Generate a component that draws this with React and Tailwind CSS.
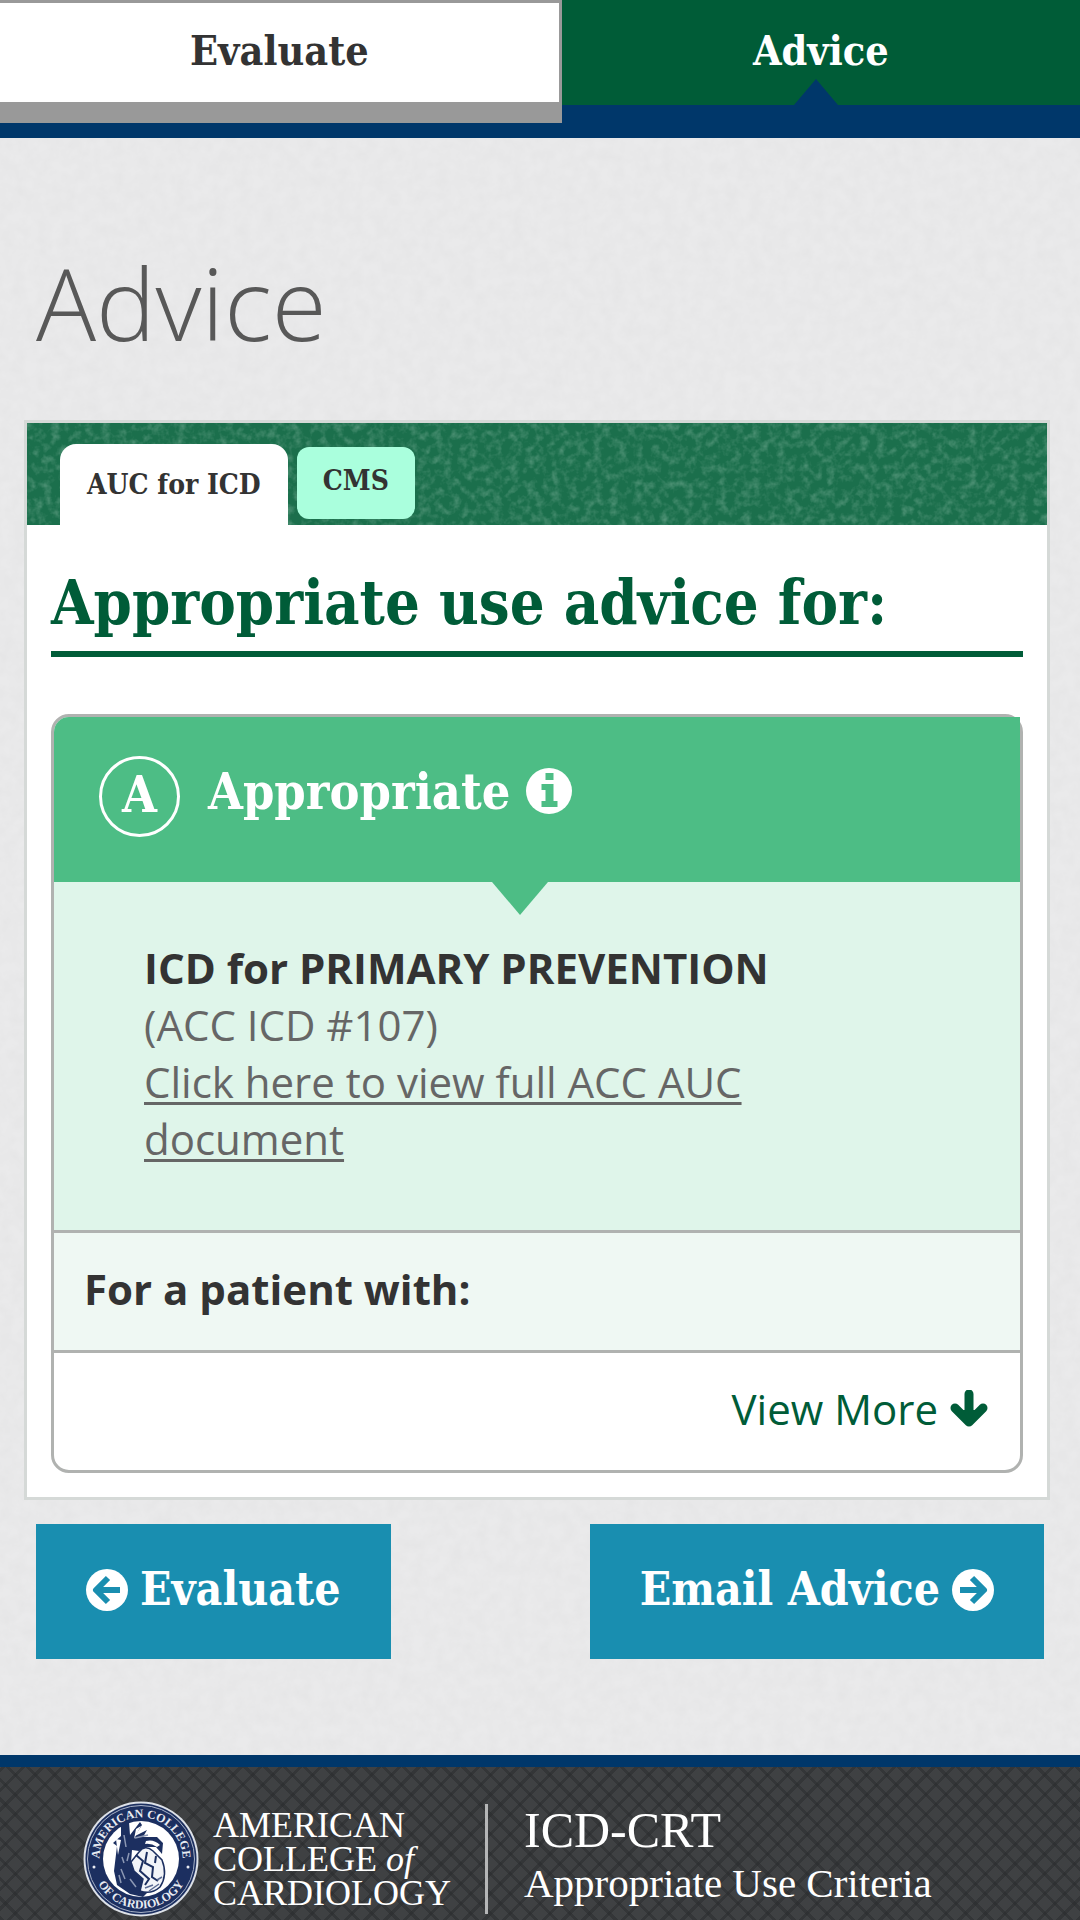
import { useState } from 'react';

const panelTabs = ['AUC for ICD', 'CMS'];

function Noise({ id, frequency, matrix }) {
  return (
    <svg className="absolute inset-0 w-full h-full pointer-events-none" aria-hidden="true">
      <filter id={id} x="0" y="0" width="100%" height="100%">
        <feTurbulence type="fractalNoise" baseFrequency={frequency} numOctaves="3" seed="4" />
        <feColorMatrix type="matrix" values={matrix} />
      </filter>
      <rect width="100%" height="100%" filter={`url(#${id})`} />
    </svg>
  );
}

function ArrowCircle({ className }) {
  return (
    <svg viewBox="0 0 42 42" className={className} aria-hidden="true">
      <circle cx="21" cy="21" r="21" fill="#fff" />
      <path d="M12 21H34" fill="none" stroke="#198eb0" strokeWidth="6" />
      <path d="M22 9L10 21L22 33" fill="none" stroke="#198eb0" strokeWidth="6" strokeLinejoin="round" />
    </svg>
  );
}

function InfoCircle() {
  return (
    <svg viewBox="0 0 46 46" className="w-[46px] h-[46px]" aria-hidden="true">
      <circle cx="23" cy="23" r="23" fill="#fff" />
      <path d="M19.500 5h8v7h-8zM15.500 16h12v17h4v6h-16v-6h4v-11h-4z" fill="#4dbd85" />
    </svg>
  );
}

function ArrowDown() {
  return (
    <svg viewBox="0 0 38 38" className="w-[38px] h-[38px]" aria-hidden="true">
      <path
        d="M19 4V28M5 18L19 32L33 18"
        fill="none"
        stroke="#005c38"
        strokeWidth="9"
        strokeLinecap="round"
        strokeLinejoin="round"
      />
      <path d="M12 20H26L19 32Z" fill="#005c38" />
    </svg>
  );
}

function Seal() {
  return (
    <svg viewBox="0 0 116 116" className="w-[116px] h-[116px] shrink-0" role="img" aria-label="American College of Cardiology seal">
      <circle cx="58" cy="58" r="57.500" fill="#dde1e8" />
      <circle cx="58" cy="58" r="55.500" fill="#1c2f60" />
      <circle cx="58" cy="58" r="53.500" fill="none" stroke="#a9b3c8" strokeWidth="1" />
      <circle cx="58" cy="58" r="38" fill="#fff" />
      <defs>
        <path id="seal-top" d="M17.460 67.360A41.600 41.600 0 1 1 98.540 67.360" />
        <path id="seal-bottom" d="M8.500 58A49.500 49.500 0 0 0 107.500 58" />
      </defs>
      <g fill="#e8ebf2" fontFamily="Liberation Serif, serif" fontSize="12" fontWeight="700" textAnchor="middle">
        <text><textPath href="#seal-top" startOffset="50%">AMERICAN COLLEGE</textPath></text>
        <text><textPath href="#seal-bottom" startOffset="50%">OF CARDIOLOGY</textPath></text>
      </g>
      <circle cx="11" cy="66" r="1.500" fill="#e8ebf2" />
      <circle cx="105" cy="66" r="1.500" fill="#e8ebf2" />
      {/* heart engraving */}
      <path d="M38 24L46 21L47 34L57 21L59 24L52 35L64 29L60 36L74 36L80 42L79 53L73 46L64 46L56 50L49 49L48 61L52 71L60 78L58 88L64 92L60 96L47 93L34 84L31 70L34 45L30 42L38 35Z" fill="#1c2f60" />
      <path d="M53 28L58 25L51 38ZM63 40Q71 38 77 44L74 46Q68 42 62 43ZM33 38L38 39L35 54Z" fill="#fff" />
      <path d="M56 51Q62 43 70 50L79 59Q85 74 77 86Q68 94 57 90L60 78L51 70L48 61Z" fill="#f2f4f8" stroke="#1c2f60" strokeWidth="1.500" />
      <path d="M53 54L60 60L57 70L66 78L62 84M64 51L62 62L70 66L69 76L75 80M73 55L72 62" fill="none" stroke="#1c2f60" strokeWidth="2" />
      <path d="M62 87L70 84M66 90L76 83M79 76L74 79" fill="none" stroke="#5a6a92" strokeWidth="1.500" />
      <path d="M41 34L43 46M39 56L41 62M38 68L42 78M47 78L53 86M46 52L44 60M52 37L65 34M36 74L38 82" fill="none" stroke="#8c98b4" strokeWidth="1.500" />
    </svg>
  );
}

function App() {
  const [activeTab, setActiveTab] = useState('AUC for ICD');

  return (
    <div className="relative isolate min-h-screen flex flex-col bg-[#eaeaeb] font-['Open_Sans',sans-serif] text-[#333]">
      <div className="absolute inset-0 -z-10">
        <Noise id="paper" frequency="0.08" matrix="0 0 0 0 0.5  0 0 0 0 0.5  0 0 0 0 0.5  0.15 0 0 0 -0.04" />
      </div>

      {/* Step navigation */}
      <nav className="flex items-start h-[138px] bg-[#00376a] text-center font-['DejaVu_Serif_Condensed','DejaVu_Serif',serif] font-bold text-[41px] leading-[96px]">
        <a href="#evaluate" className="w-[52%] bg-white border-[#999] border-t-3 border-r-3 border-b-[21px] h-[123px]">
          Evaluate
        </a>
        <a href="#advice" className="relative flex-1 h-[105px] pt-[3px] bg-[#005c37] text-white">
          Advice
          <span className="absolute bottom-0 left-[49%] -translate-x-1/2 border-x-[22px] border-x-transparent border-b-[26px] border-b-[#00376a]" />
        </a>
      </nav>

      <main className="flex-1">
        <h1 className="px-9 pt-[94px] pb-[48px] text-[100px] leading-[140px] font-light text-[#585858]">Advice</h1>

        <section className="ml-6 mr-[30px] border-3 border-[#d5d9d7] bg-white">
          <div className="relative isolate h-[102px] bg-[#1b6f4c] flex items-end px-[33px] gap-[9px] font-['DejaVu_Serif_Condensed','DejaVu_Serif',serif] font-bold text-[28px]" role="tablist">
            <div className="absolute inset-0 -z-10">
              <Noise id="speckle" frequency="0.12" matrix="0 0 0 0 0.6  0 0 0 0 0.8  0 0 0 0 0.7  0.600 0 0 0 -0.260" />
            </div>
            {panelTabs.map((tab) => (
              <button
                key={tab}
                role="tab"
                aria-selected={activeTab === tab}
                onClick={() => setActiveTab(tab)}
                className={
                  activeTab === tab
                    ? 'h-[81px] px-[27px] rounded-t-2xl bg-white'
                    : 'h-[72px] mb-[6px] px-[26px] pb-1 rounded-xl bg-[#aaffdd]'
                }
              >
                {tab}
              </button>
            ))}
          </div>

          <div className="p-6 pt-[38px]">
            <h2 className="pb-2 border-b-6 border-[#005c38] font-['DejaVu_Serif_Condensed','DejaVu_Serif',serif] font-bold text-[61px] leading-[80px] text-[#005c38]">
              Appropriate use advice for:
            </h2>

            <div className="mt-[57px] border-3 border-[#b0b2b0] rounded-[18px]">
              <div className="relative h-[165px] pl-[45px] pt-[39px] flex items-start bg-[#4dbd85] rounded-tl-[15px] text-white font-['DejaVu_Serif_Condensed','DejaVu_Serif',serif] font-bold">
                <span className="w-[81px] h-[81px] rounded-full border-3 border-white text-center text-[50px] leading-[72px]">A</span>
                <h3 className="ml-7 text-[50px] leading-[72px]">Appropriate</h3>
                <button className="ml-4 mt-3" aria-label="About this rating">
                  <InfoCircle />
                </button>
                <span className="absolute top-full left-[438px] border-x-[28px] border-x-transparent border-t-[33px] border-t-[#4dbd85]" />
              </div>

              <div className="h-[348px] pl-[90px] pr-[200px] pt-[57px] bg-[#dff5ea] text-[42px] leading-[57px] text-[#666]">
                <p className="font-bold text-[#333]">ICD for PRIMARY PREVENTION</p>
                <p>(ACC ICD #107)</p>
                <a href="#document" className="underline decoration-3 underline-offset-4">
                  Click here to view full ACC AUC document
                </a>
              </div>

              <div className="h-[120px] px-[30px] border-t-3 border-[#b0b2b0] bg-[#eff8f3] text-[42px] leading-[111px] font-bold">
                For a patient with:
              </div>

              <div className="h-[120px] px-8 pb-[6px] border-t-3 border-[#b0b2b0] flex justify-end">
                <button className="flex items-center gap-3 text-[42px] text-[#005c38]">
                  View More <ArrowDown />
                </button>
              </div>
            </div>
          </div>
        </section>

        <div className="px-9 pt-6 pb-[96px] flex justify-between text-white font-['DejaVu_Serif_Condensed','DejaVu_Serif',serif] font-bold text-[46px]">
          <button className="h-[135px] px-[50px] pb-1 flex items-center gap-3 bg-[#198eb0]">
            <ArrowCircle className="w-[42px] h-[42px]" /> Evaluate
          </button>
          <button className="h-[135px] px-[50px] pb-1 flex items-center gap-3 bg-[#198eb0]">
            Email Advice <ArrowCircle className="w-[42px] h-[42px] rotate-180" />
          </button>
        </div>
      </main>

      <footer className="h-[165px] border-t-12 border-[#00376a] pl-[83px] pt-[34px] flex items-start bg-[#3f4143] bg-[repeating-linear-gradient(45deg,#292b2d80_0_3px,transparent_3px_14px),repeating-linear-gradient(-45deg,#292b2d80_0_3px,transparent_3px_14px)] font-['Liberation_Serif',serif] text-white">
        <Seal />
        <p className="ml-[14px] mt-[7px] text-[36px] leading-[34px]">
          AMERICAN
          <br />
          COLLEGE <em>of</em>
          <br />
          CARDIOLOGY
        </p>
        <div className="ml-[34px] mt-[3px] w-[3px] h-[110px] bg-[#b5b6b7]" />
        <div className="ml-9">
          <p className="text-[50px] leading-[58px]">ICD-CRT</p>
          <p className="text-[41px] leading-[48px]">Appropriate Use Criteria</p>
        </div>
      </footer>
    </div>
  );
}

export default App;
